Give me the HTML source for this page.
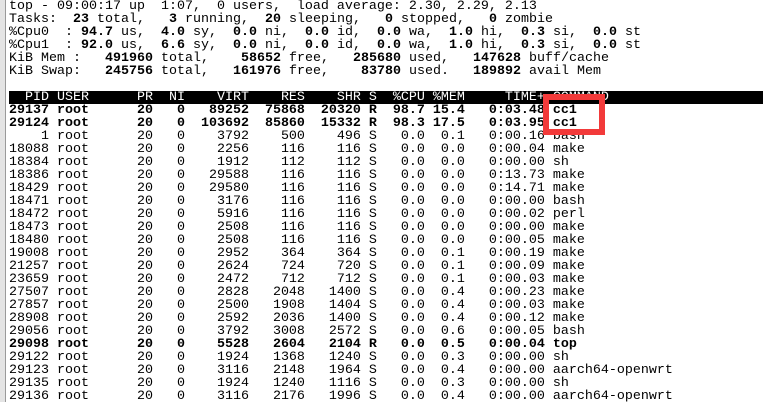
<!DOCTYPE html>
<html><head><style>
html,body{margin:0;padding:0;width:763px;height:402px;overflow:hidden;background:#fff}
.lb{position:absolute;left:0;top:0;width:5px;height:402px;background:#e4e4e4;border-right:1px solid #9a9a9a}
pre{position:absolute;left:9px;top:0;margin:0;font-family:"Liberation Mono","DejaVu Sans Mono",monospace;font-size:13.33px;line-height:13px;color:#000;white-space:pre}
b{font-weight:bold}
.hd{position:absolute;left:9px;top:91px;width:754px;height:13px;background:#000}
.hdt{color:#fff}
.box{position:absolute;left:543px;top:94px;width:50px;height:29px;border:6px solid #f23a3a}
</style></head><body>
<div class="lb"></div>
<div class="hd"></div>
<pre>top - 09:00:17 up  1:07,  0 users,  load average: 2.30, 2.29, 2.13
Tasks: <b> 23</b> total, <b>  3</b> running, <b> 20</b> sleeping, <b>  0</b> stopped, <b>  0</b> zombie
%Cpu0  :<b> 94.7</b> us, <b> 4.0</b> sy, <b> 0.0</b> ni, <b> 0.0</b> id, <b> 0.0</b> wa, <b> 1.0</b> hi, <b> 0.3</b> si, <b> 0.0</b> st
%Cpu1  :<b> 92.0</b> us, <b> 6.6</b> sy, <b> 0.0</b> ni, <b> 0.0</b> id, <b> 0.0</b> wa, <b> 1.0</b> hi, <b> 0.3</b> si, <b> 0.0</b> st
KiB Mem : <b>  491960</b> total, <b>   58652</b> free, <b>  285680</b> used, <b>  147628</b> buff/cache
KiB Swap: <b>  245756</b> total, <b>  161976</b> free, <b>   83780</b> used. <b>  189892</b> avail Mem

<span class="hdt">  PID USER      PR  NI    VIRT    RES    SHR S  %CPU %MEM     TIME+ COMMAND</span>
<b>29137 root      20   0   89252  75868  20320 R  98.7 15.4   0:03.48 cc1</b>
<b>29124 root      20   0  103692  85860  15332 R  98.3 17.5   0:03.95 cc1</b>
    1 root      20   0    3792    500    496 S   0.0  0.1   0:00.16 bash
18088 root      20   0    2256    116    116 S   0.0  0.0   0:00.04 make
18384 root      20   0    1912    112    112 S   0.0  0.0   0:00.00 sh
18386 root      20   0   29588    116    116 S   0.0  0.0   0:13.73 make
18429 root      20   0   29580    116    116 S   0.0  0.0   0:14.71 make
18471 root      20   0    3176    116    116 S   0.0  0.0   0:00.00 bash
18472 root      20   0    5916    116    116 S   0.0  0.0   0:00.02 perl
18473 root      20   0    2508    116    116 S   0.0  0.0   0:00.00 make
18480 root      20   0    2508    116    116 S   0.0  0.0   0:00.05 make
19008 root      20   0    2952    364    364 S   0.0  0.1   0:00.19 make
21257 root      20   0    2624    724    720 S   0.0  0.1   0:00.09 make
23659 root      20   0    2472    712    712 S   0.0  0.1   0:00.03 make
27507 root      20   0    2828   2048   1400 S   0.0  0.4   0:00.23 make
27857 root      20   0    2500   1908   1404 S   0.0  0.4   0:00.03 make
28908 root      20   0    2592   2036   1400 S   0.0  0.4   0:00.12 make
29056 root      20   0    3792   3008   2572 S   0.0  0.6   0:00.05 bash
<b>29098 root      20   0    5528   2604   2104 R   0.0  0.5   0:00.04 top</b>
29122 root      20   0    1924   1368   1240 S   0.0  0.3   0:00.00 sh
29123 root      20   0    3116   2148   1964 S   0.0  0.4   0:00.00 aarch64-openwrt
29135 root      20   0    1924   1240   1116 S   0.0  0.3   0:00.00 sh
29136 root      20   0    3116   2176   1996 S   0.0  0.4   0:00.00 aarch64-openwrt</pre>
<div class="box"></div>
</body></html>
